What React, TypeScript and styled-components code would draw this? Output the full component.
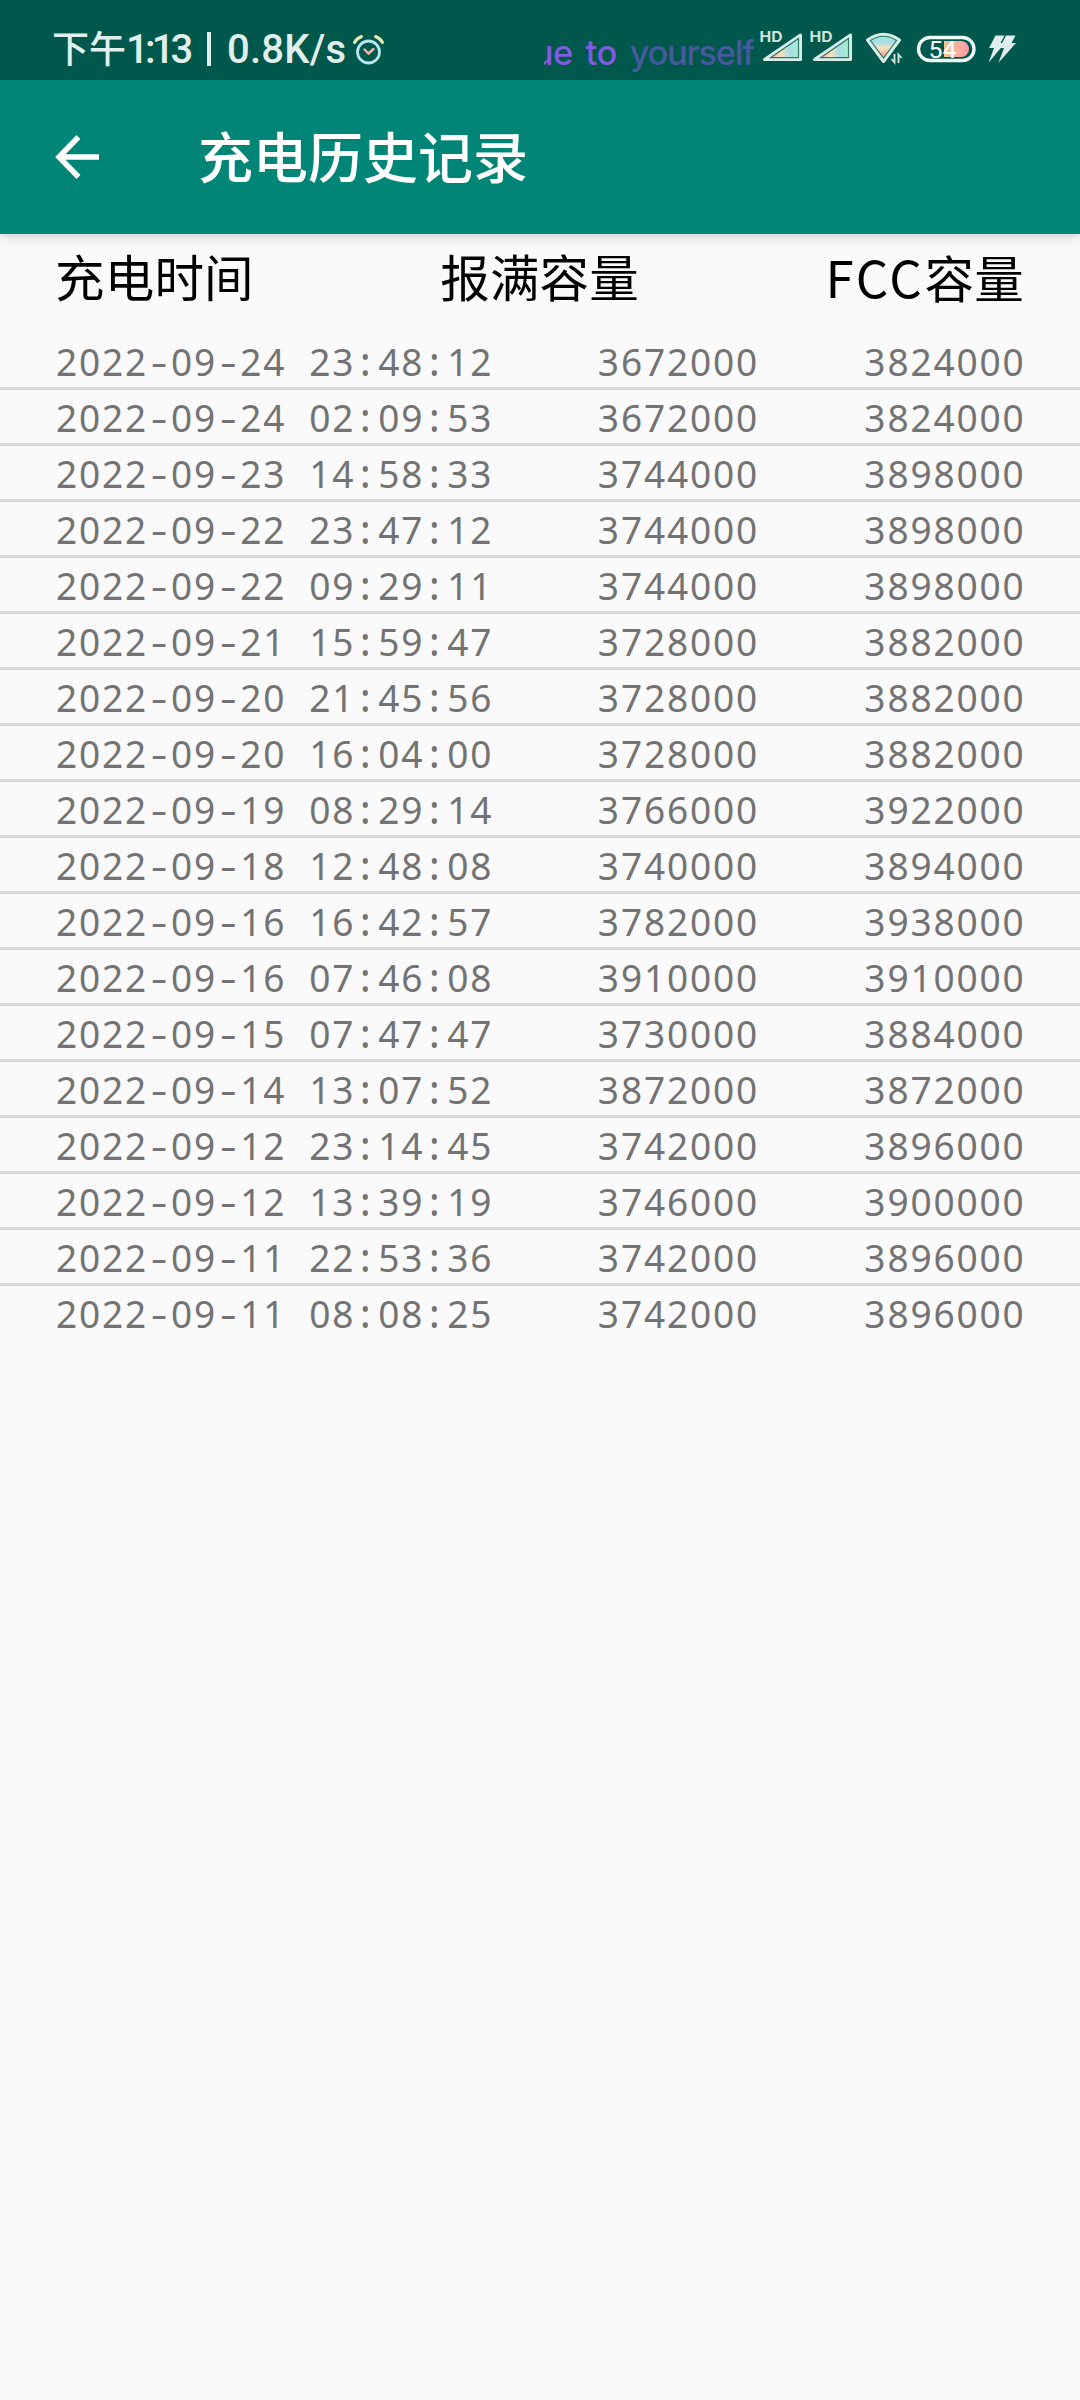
import React from "react";
import styled, { createGlobalStyle } from "styled-components";

const cjk = '"Noto Sans CJK SC", sans-serif';

const GlobalStyle = createGlobalStyle`
  body { margin: 0; background: #fafafa; }
  * { box-sizing: border-box; }
`;

const Screen = styled.div`
  width: 1080px;
  height: 2400px;
  background: #fafafa;
  display: flex;
  flex-direction: column;
  overflow: hidden;
`;

const StatusBar = styled.header`
  position: relative;
  z-index: 1;
  height: 80px;
  flex: none;
  background: #00574b;
  display: flex;
  align-items: flex-start;
  padding-left: 52px;
`;

const StatusText = styled.span<{ $w: number; $ls?: number; $cjk?: boolean }>`
  flex: none;
  width: ${(p) => p.$w}px;
  margin-top: ${(p) => (p.$cjk ? 19 : 20)}px;
  height: 56px;
  white-space: pre;
  color: #e0efec;
  font: ${(p) => (p.$cjk ? `500 37px/56px ${cjk}` : "500 40px/59px Roboto, sans-serif")};
  letter-spacing: ${(p) => p.$ls ?? 0}px;
`;

const StatusRule = styled.i`
  flex: none;
  width: 4px;
  height: 34px;
  margin: 32px 16px 0 0;
  background: #e0efec;
`;

const Marquee = styled.div`
  flex: none;
  width: 210px;
  height: 80px;
  margin-left: 159px;
  margin-right: 2px;
  overflow: hidden;
  display: flex;
  justify-content: flex-end;
  white-space: pre;
  font: 550 34.5px/105px Inter, sans-serif;
`;

const MarqueeWord = styled.span<{ $color: string; $ls: number; $gap?: number }>`
  color: ${(p) => p.$color};
  letter-spacing: ${(p) => p.$ls}px;
  margin-right: ${(p) => p.$gap ?? 0}px;
`;

const Tray = styled.svg`
  flex: none;
  display: block;
`;

const AppBar = styled.div`
  position: relative;
  height: 154px;
  flex: none;
  background: #008577;
  box-shadow: 0 2px 12px rgba(0, 0, 0, 0.2);
  display: flex;
  align-items: center;
  padding-left: 55px;
  gap: 99px;
`;

const BackButton = styled.button`
  width: 44px;
  height: 48px;
  padding: 0;
  border: 0;
  background: none;
  svg { display: block; }
`;

const Title = styled.h1`
  margin: 0 0 7px;
  font: 500 55px/80px ${cjk};
  color: #fff;
`;

const Table = styled.main`
  display: flex;
  flex-direction: column;
`;

const HeadRow = styled.div`
  height: 100px;
  display: flex;
  justify-content: space-between;
  padding: 6px 56px 0 55px;
  font: 400 49.5px/72px ${cjk};
  letter-spacing: 0.2px;
  color: #000;
`;

const Latin = styled.span`
  font-size: 51px;
  letter-spacing: 2.7px;
`;

const Row = styled.div`
  height: 56px;
  display: grid;
  grid-template-columns: 1fr 200px 266.5px;
  padding: 0 54.5px 0 56px;
  border-bottom: 3px solid #dadada;
  font: 420 39px/54px "Noto Sans", sans-serif;
  letter-spacing: 1.92px;
  color: #737373;
  white-space: pre;
  &:last-child { border-bottom: 0; }
`;

const Cell = styled.span<{ $end?: boolean }>`
  text-align: ${(p) => (p.$end ? "right" : "left")};
  transform: scaleX(0.95);
  transform-origin: ${(p) => (p.$end ? "right" : "left")};
`;

const Mark = styled.span<{ $dash: boolean }>`
  display: inline-block;
  width: 24.23px;
  letter-spacing: 0;
  text-align: center;
  text-indent: ${(p) => (p.$dash ? -1 : -3)}px;
  font-weight: ${(p) => (p.$dash ? 420 : 500)};
  transform: scaleX(${(p) => (p.$dash ? 1.4 : 1)});
`;

const rows: [string, number, number][] = [
  ["2022-09-24 23:48:12", 3672000, 3824000],
  ["2022-09-24 02:09:53", 3672000, 3824000],
  ["2022-09-23 14:58:33", 3744000, 3898000],
  ["2022-09-22 23:47:12", 3744000, 3898000],
  ["2022-09-22 09:29:11", 3744000, 3898000],
  ["2022-09-21 15:59:47", 3728000, 3882000],
  ["2022-09-20 21:45:56", 3728000, 3882000],
  ["2022-09-20 16:04:00", 3728000, 3882000],
  ["2022-09-19 08:29:14", 3766000, 3922000],
  ["2022-09-18 12:48:08", 3740000, 3894000],
  ["2022-09-16 16:42:57", 3782000, 3938000],
  ["2022-09-16 07:46:08", 3910000, 3910000],
  ["2022-09-15 07:47:47", 3730000, 3884000],
  ["2022-09-14 13:07:52", 3872000, 3872000],
  ["2022-09-12 23:14:45", 3742000, 3896000],
  ["2022-09-12 13:39:19", 3746000, 3900000],
  ["2022-09-11 22:53:36", 3742000, 3896000],
  ["2022-09-11 08:08:25", 3742000, 3896000],
];

// Punctuation gets the same advance as a digit so timestamps line up.
const Timestamp = ({ value }: { value: string }) => (
  <Cell>
    {value.split(/([-: ])/).map((part, i) =>
      i % 2 ? <Mark key={i} $dash={part === "-"}>{part}</Mark> : part
    )}
  </Cell>
);

const AlarmIcon = () => (
  <Tray width="36" height="80" viewBox="349 0 36 80" fill="none" strokeLinecap="round">
    <circle cx="368.5" cy="52" r="11" stroke="#b9e6f0" strokeWidth="2.8" />
    <path d="M364.5 49.5l4 4 5-4.5" stroke="#f0b8b0" strokeWidth="2.4" />
    <path d="M354.5 42.5q2-4 7-6" stroke="#e8edb5" strokeWidth="3" />
    <path d="M382.5 42.5q-2-4-7-6" stroke="#e8edb5" strokeWidth="3" />
  </Tray>
);

const Signal = ({ x }: { x: number }) => (
  <g transform={`translate(${x} 0)`}>
    <text x="19.5" y="42.3" fontFamily="Inter, sans-serif" fontSize="14.5" fontWeight="700" fill="#cfe3df" textLength="23" lengthAdjust="spacingAndGlyphs">HD</text>
    <path d="M24.5 59.5L60.5 35v24.5z" fill="url(#rainbow)" stroke="#d8efe9" strokeWidth="3" strokeLinejoin="round" />
    <path d="M30.5 57.7L58.5 38.5V57.7z" stroke="#33766b" strokeWidth="1.2" />
  </g>
);

const TrayIcons = () => (
  <Tray width="325" height="80" viewBox="756 0 325 80" fill="none">
    <defs>
      <linearGradient id="rainbow">
        <stop offset="0.22" stopColor="#f8b0a4" />
        <stop offset="0.45" stopColor="#f8e4bd" />
        <stop offset="0.7" stopColor="#a5dcea" />
        <stop offset="0.95" stopColor="#a6f2c4" />
      </linearGradient>
      <linearGradient id="fan" x2="0" y2="1">
        <stop offset="0.1" stopColor="#a0e8d8" />
        <stop offset="0.3" stopColor="#a8dcea" />
        <stop offset="0.5" stopColor="#f6e5bd" />
        <stop offset="0.75" stopColor="#f5a9a2" />
      </linearGradient>
      <linearGradient id="charge">
        <stop offset="0" stopColor="#f3c58b" />
        <stop offset="0.5" stopColor="#f6b29f" />
        <stop offset="1" stopColor="#ff9aa5" />
      </linearGradient>
    </defs>
    <Signal x={740} />
    <Signal x={790} />
    <path d="M867.5 40q16-11.5 32 0L883.5 61.5z" fill="url(#fan)" stroke="#d8efe9" strokeWidth="3" strokeLinejoin="round" />
    <path d="M870.5 40.5q13-8.5 26 0L883.5 58z" stroke="#33766b" strokeWidth="1.2" />
    <path d="M894.5 54v8.5l-3-3.5M898.5 63v-8.5l3 3.5" stroke="#cfe3df" strokeWidth="1.9" />
    <rect x="918.5" y="37.5" width="55.5" height="23" rx="11.5" stroke="#f1faf8" strokeWidth="3.4" />
    <path d="M944 41h17a8 8 0 0 1 0 16h-17z" fill="url(#charge)" />
    <text x="928.5" y="58.3" fontFamily="Roboto, sans-serif" fontSize="24.5" fontWeight="400" fill="#fff" textLength="28" lengthAdjust="spacingAndGlyphs">54</text>
    <path d="M995.5 35.5h9l-4 7.5h4.5L988.5 62.7l5.5-14.7h-5z" fill="#e0efec" />
    <path d="M1006 35.5h9.5l-4 7.5h4.5L998.5 62.7l5.5-14.7h-4.5z" fill="#e0efec" />
  </Tray>
);

export default function App() {
  return (
    <Screen>
      <GlobalStyle />
      <StatusBar>
        <StatusText $w={74} $cjk>下午</StatusText>
        <StatusText $w={81} $ls={-3.8}>1:13</StatusText>
        <StatusRule />
        <StatusText $w={122} $ls={0.2}>0.8K/s</StatusText>
        <AlarmIcon />
        <Marquee>
          <MarqueeWord $color="#7e5bdf" $ls={-0.6} $gap={13}>ue</MarqueeWord>
          <MarqueeWord $color="#7e5bdf" $ls={-0.6} $gap={13}>to</MarqueeWord>
          <MarqueeWord $color="#455a9d" $ls={-1.3}>yourself</MarqueeWord>
        </Marquee>
        <TrayIcons />
      </StatusBar>
      <AppBar>
        <BackButton aria-label="返回">
          <svg width="44" height="48" viewBox="0 0 44 48" fill="none" stroke="#fff" strokeWidth="5.5">
            <path d="M44 24H4M23.5 4L4 24L23.5 44" />
          </svg>
        </BackButton>
        <Title>充电历史记录</Title>
      </AppBar>
      <Table>
        <HeadRow>
          <span>充电时间</span>
          <span>报满容量</span>
          <span><Latin>FCC</Latin>容量</span>
        </HeadRow>
        {rows.map(([time, full, fcc]) => (
          <Row key={time}>
            <Timestamp value={time} />
            <Cell $end>{full}</Cell>
            <Cell $end>{fcc}</Cell>
          </Row>
        ))}
      </Table>
    </Screen>
  );
}
